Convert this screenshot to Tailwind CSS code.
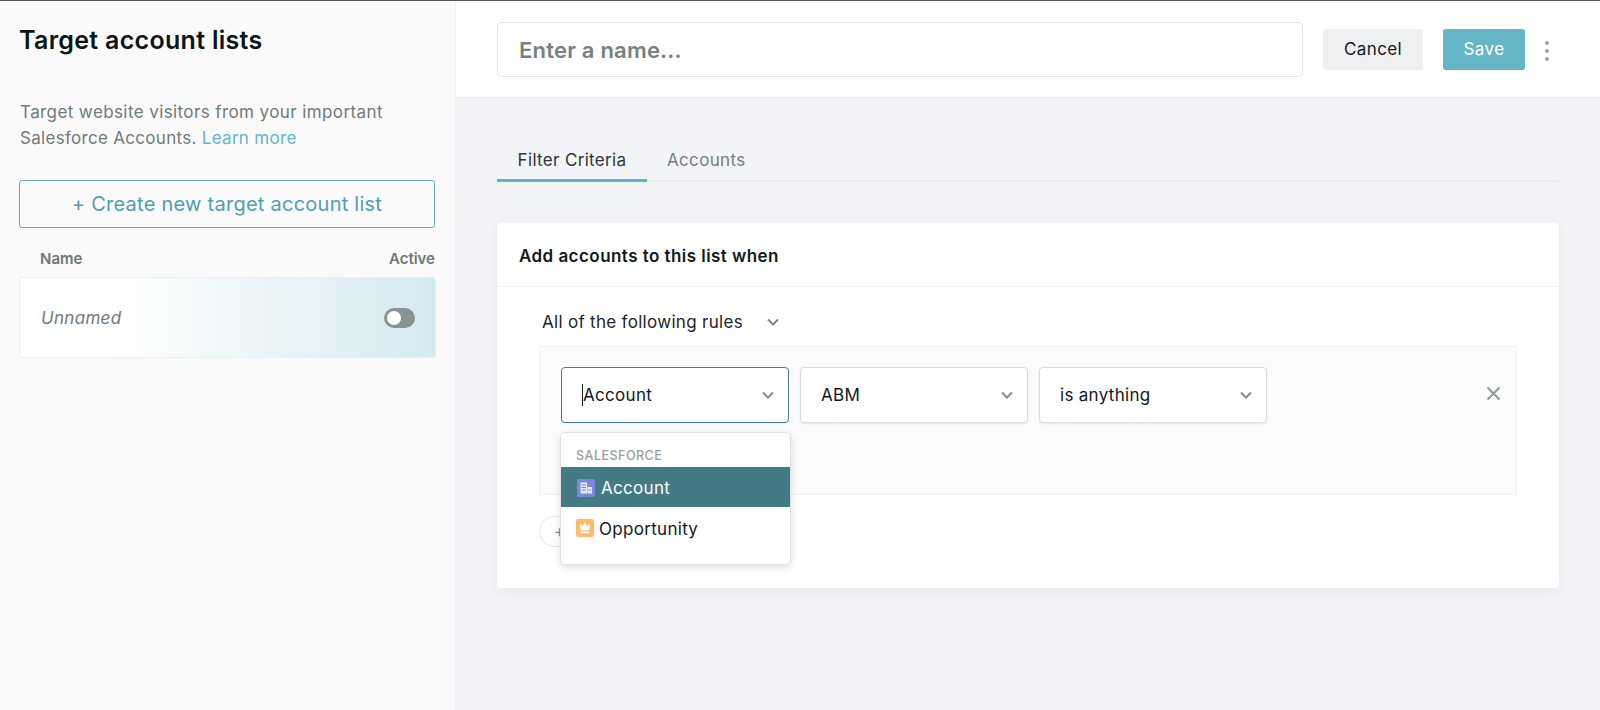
<!DOCTYPE html>
<html>
<head>
<meta charset="utf-8">
<script src="https://cdn.jsdelivr.net/npm/@tailwindcss/browser@4"></script>
</head>
<body class="m-0 overflow-hidden">
<div class="w-[1600px] h-[710px] flex flex-col overflow-hidden font-['Inter',sans-serif] text-[#12191b] bg-[#f3f4f8]">
  <div class="h-px bg-[#5a5558] shrink-0"></div>
  <div class="flex flex-1 min-h-0">
    <aside class="w-[456px] shrink-0 bg-[#fafafa] border-r border-[#eff0f2] pl-[19px] pr-[20px]">
      <h1 class="text-[25px] leading-[30px] font-semibold text-[#0d1517] mt-[24px] tracking-[0.3px]">Target account lists</h1>
      <p class="mt-[45px] ml-px text-[17px] leading-[25.5px] text-[#6f7a79] tracking-[0.4px]">Target website visitors from your important<br><span class="tracking-[0.3px]">Salesforce Accounts. </span><span class="text-[#62b6c8] tracking-[0.3px]">Learn more</span></p>
      <div class="mt-[29px] w-[416px] h-[48px] border border-[#66aabb] rounded-[3px] flex items-center justify-center text-[20px] text-[#4f9fae] tracking-[0.25px]">+ Create new target account list</div>
      <div class="flex justify-between w-[416px] mt-[21px] pl-[21px] text-[15px] leading-[20px] font-semibold text-[#6d7877]">
        <span>Name</span><span>Active</span>
      </div>
      <div class="mt-[8px] w-[417px] h-[81px] rounded-[3px] border border-[#eceef0] bg-gradient-to-r from-white from-[22%] to-[#d5eaf0] flex items-center justify-between pl-[21px] pr-[20px]">
        <span class="italic text-[17px] text-[#6f7a79] tracking-[0.3px] mt-[3px]">Unnamed</span>
        <span class="w-[31px] h-[20px] rounded-full bg-[#8a9393] flex items-center pl-[3px]"><span class="w-[14px] h-[14px] rounded-full bg-white"></span></span>
      </div>
    </aside>
    <main class="flex-1 min-w-0 flex flex-col">
      <header class="h-[97px] shrink-0 bg-white border-b border-[#e9ebef] flex items-center pl-[41px]">
        <div class="w-[806px] h-[55px] rounded-[4px] border border-[#e4e6ea] flex items-center pl-[21px] pt-[2px] text-[22px] font-semibold text-[#778281] tracking-[0.2px]">Enter a name...</div>
        <button class="ml-[20px] w-[100px] h-[41px] rounded-[3px] bg-[#eeeff1] pt-[2px] text-[17px] text-[#12191b] tracking-[0.4px]">Cancel</button>
        <button class="ml-[20px] w-[82px] h-[41px] rounded-[3px] bg-[#65b6c6] pt-[2px] text-[17px] text-white tracking-[0.4px]">Save</button>
        <div class="ml-[20px] flex flex-col gap-[4px] mt-[4px]">
          <span class="w-[4px] h-[4px] rounded-full bg-[#9fa5a5]"></span>
          <span class="w-[4px] h-[4px] rounded-full bg-[#9fa5a5]"></span>
          <span class="w-[4px] h-[4px] rounded-full bg-[#9fa5a5]"></span>
        </div>
      </header>
      <div class="pl-[41px] pr-[41px]">
        <div class="mt-[46px] h-[38px] border-b-2 border-[#eaebef] flex text-[17px] leading-[32px] tracking-[0.33px]">
          <div class="w-[150px] h-[38px] border-b-[3px] border-[#5db5c8] text-center text-[#2c3739]">Filter Criteria</div>
          <div class="ml-[20px] text-[#737e7e] leading-[33px]">Accounts</div>
        </div>
        <section class="relative mt-[41px] h-[365px] bg-white rounded-[4px] shadow-[0_4px_14px_rgba(30,40,80,0.05)]">
          <div class="h-[64px] border-b border-[#f1f2f4] flex items-center pl-[22px] pt-[5px] text-[17px] font-semibold text-[#12191b] tracking-[0.45px]">Add accounts to this list when</div>
          <div class="h-[59px] pl-[45px] pt-[12px] flex items-center text-[17px] text-[#1d2628] tracking-[0.3px]">
            All of the following rules
            <svg class="ml-[23px]" width="14" height="9" viewBox="0 0 14 9" fill="none" stroke="#818b8b" stroke-width="2"><path d="M2 1.500 7 6.500 12 1.500"/></svg>
          </div>
          <div class="ml-[42px] w-[978px] h-[149px] border border-[#f0f1f3] bg-[#fbfbfc] pl-[21px] pt-[20px] flex items-start gap-[11px] relative tracking-[0.3px]">
            <div class="w-[228px] h-[56px] rounded-[4px] bg-white border border-[#47808c] shadow-[0_1px_2px_rgba(0,0,0,0.08)] flex items-center justify-between pl-[20px] pr-[13px] text-[17px]">
              <span class="border-l border-[#12191b] leading-[22px]">Account</span>
              <svg width="14" height="9" viewBox="0 0 14 9" fill="none" stroke="#818b8b" stroke-width="2"><path d="M2 1.500 7 6.500 12 1.500"/></svg>
            </div>
            <div class="w-[228px] h-[56px] rounded-[4px] bg-white border border-[#d5dce0] shadow-[0_1px_2px_rgba(0,0,0,0.08)] flex items-center justify-between pl-[20px] pr-[13px] text-[17px]">
              <span class="mt-[1px]">ABM</span>
              <svg width="14" height="9" viewBox="0 0 14 9" fill="none" stroke="#818b8b" stroke-width="2"><path d="M2 1.500 7 6.500 12 1.500"/></svg>
            </div>
            <div class="w-[228px] h-[56px] rounded-[4px] bg-white border border-[#d5dce0] shadow-[0_1px_2px_rgba(0,0,0,0.08)] flex items-center justify-between pl-[20px] pr-[13px] text-[17px]">
              <span class="mt-[1px]">is anything</span>
              <svg width="14" height="9" viewBox="0 0 14 9" fill="none" stroke="#818b8b" stroke-width="2"><path d="M2 1.500 7 6.500 12 1.500"/></svg>
            </div>
            <svg class="absolute left-[946px] top-[39px]" width="15" height="15" viewBox="0 0 15 15" fill="none" stroke="#8f9999" stroke-width="2"><path d="M1.500 1.500 13.500 13.500M13.500 1.500 1.500 13.500"/></svg>
          </div>
          <div class="ml-[42px] mt-[21px] w-[60px] h-[31px] rounded-full border border-[#e3e5e8] bg-white pl-[14px] leading-[28px] text-[17px] text-[#818b8b]">+</div>
          <div class="absolute left-[63px] top-[209px] w-[231px] h-[133px] rounded-[5px] bg-white border border-[#dfe1e4] shadow-[0_3px_8px_rgba(0,0,0,0.12)] pt-[13px]">
            <div class="pl-[15px] text-[12.5px] leading-[20px] font-medium text-[#9a9d9e] tracking-[0.5px]">SALESFORCE</div>
            <div class="h-[40px] mt-[1px] bg-[#447a84] flex items-center pl-[16px] text-[17px] text-white tracking-[0.3px]">
              <svg class="mt-px" width="18" height="18" viewBox="0 0 18 18"><rect width="18" height="18" rx="2" fill="#7f86e0"/><path d="M3.500 3.500h6.500v11H3.500zM10.500 8h4.500v6.500h-4.500z" fill="#e8e9fb"/><path d="M4.500 6h4.500M4.500 8.500h4.500M4.500 11h4.500M11.500 11h2.500" stroke="#7f86e0" stroke-width="1"/></svg>
              <span class="ml-[6px] mt-[4px]">Account</span>
            </div>
            <div class="h-[41px] flex items-center pl-[15px] text-[17px] text-[#12191b] tracking-[0.3px]">
              <svg width="18" height="18" viewBox="0 0 18 18"><rect width="18" height="18" rx="2" fill="#fdbc6c"/><path d="M4 4.500 6.500 7.500 9 3.500 11.500 7.500 14 4.500 13.400 11.200H4.600zM4.600 12.400h8.800v1.800H4.600z" fill="#fff"/></svg>
              <span class="ml-[5px] mt-[4px]">Opportunity</span>
            </div>
          </div>
        </section>
      </div>
    </main>
  </div>
</div>
</body>
</html>
